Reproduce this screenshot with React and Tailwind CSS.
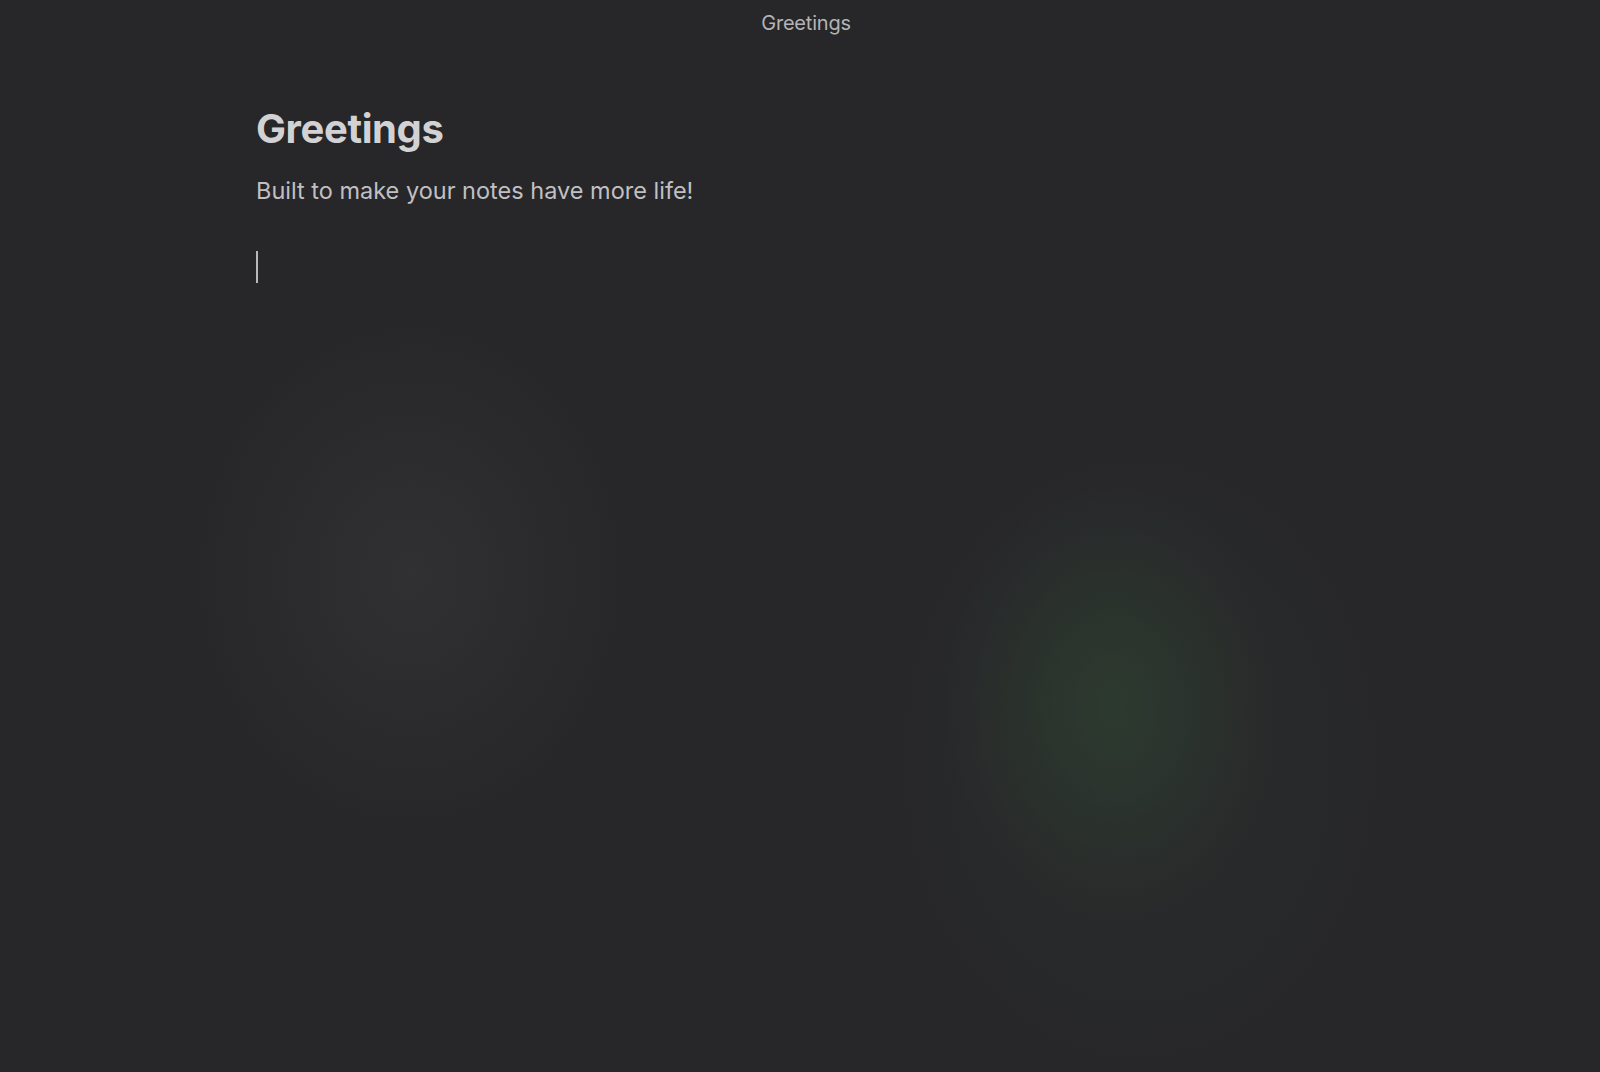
import React from 'react';

const font = { fontFamily: 'Inter, "Noto Sans", sans-serif' };

const NoteTitleBar = ({ title }) => (
  <div className="flex justify-center pt-[8px] pl-[12px]">
    <span className="text-[20px] text-[#b4b4b6] tracking-[-0.2px]">{title}</span>
  </div>
);

const NoteEditor = ({ heading, subtitle }) => (
  <div className="pl-[256px] pt-[65px]">
    <h1 className="text-[40px] leading-[52px] font-bold text-[#d2d2d4] tracking-[-0.4px]">{heading}</h1>
    <p className="mt-[20px] text-[23.5px] leading-[32px] text-[#c0c0c2]">{subtitle}</p>
    <div className="mt-[44px] w-[2px] h-[32px] bg-[#b8b8ba]"></div>
  </div>
);

export default function App() {
  return (
    <div
      className="w-[1600px] h-[1072px] overflow-hidden bg-[#272629] bg-[radial-gradient(ellipse_220px_260px_at_410px_575px,rgba(58,58,60,0.5),transparent),radial-gradient(ellipse_170px_220px_at_1112px_705px,rgba(46,62,48,0.8),transparent),radial-gradient(ellipse_340px_430px_at_1140px_760px,rgba(42,48,46,0.5),transparent)]"
      style={font}
    >
      <NoteTitleBar title="Greetings" />
      <NoteEditor heading="Greetings" subtitle="Built to make your notes have more life!" />
    </div>
  );
}
